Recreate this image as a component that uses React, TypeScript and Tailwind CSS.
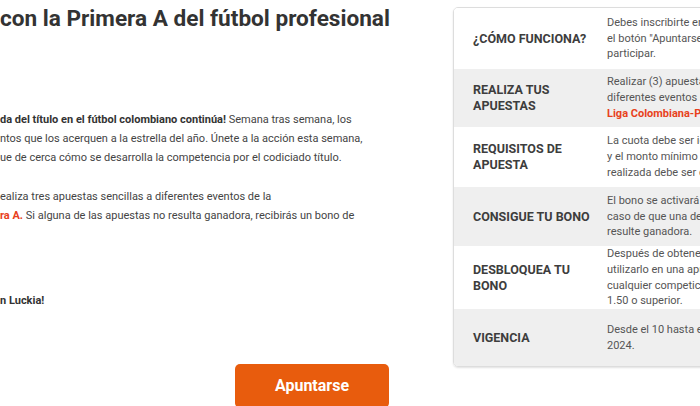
const rows = [
  {
    label: ["¿CÓMO FUNCIONA?"],
    lines: ["Debes inscribirte en la promoción a través de", 'el botón "Apuntarse" que encontrarás para', "participar."],
    h: "h-[61px]",
    gray: false,
  },
  {
    label: ["REALIZA TUS", "APUESTAS"],
    lines: ["Realizar (3) apuestas sencillas a", "diferentes eventos de la"],
    red: "Liga Colombiana-Primera A.",
    h: "h-[58px]",
    gray: true,
  },
  {
    label: ["REQUISITOS DE", "APUESTA"],
    lines: ["La cuota debe ser igual o mayor a 1.50", "y el monto mínimo de cada apuesta", "realizada debe ser de $10.000."],
    h: "h-[60px]",
    gray: false,
  },
  {
    label: ["CONSIGUE TU BONO"],
    lines: ["El bono se activará automáticamente en", "caso de que una de las tres apuestas no", "resulte ganadora."],
    h: "h-[59px]",
    gray: true,
  },
  {
    label: ["DESBLOQUEA TU", "BONO"],
    lines: ["Después de obtener tu bono, podrás", "utilizarlo en una apuesta sencilla de", "cualquier competición con cuota mínima de", "1.50 o superior."],
    h: "h-[63px]",
    gray: false,
  },
  {
    label: ["VIGENCIA"],
    lines: ["Desde el 10 hasta el 31 de marzo de", "2024."],
    h: "h-[58px]",
    gray: true,
  },
];

export default function App() {
  return (
    <div className="flex h-[406px] w-[700px] overflow-hidden bg-white font-['Roboto',sans-serif]">
      {/* left column, text runs off the left edge */}
      <div className="flex w-[453px] shrink-0 flex-col">
        <h1 className="mt-[4px] whitespace-nowrap text-[22.6px] font-bold leading-[30px] text-[#333]">
          con la Primera A del fútbol profesional
        </h1>

        <div className="mt-[76px] text-[11px] leading-[19px] text-[#444]">
          <p className="whitespace-nowrap">
            <b className="font-bold text-[#333]">da del título en el fútbol colombiano continúa!</b> Semana tras semana, los
          </p>
          <p className="whitespace-nowrap">ntos que los acerquen a la estrella del año. Únete a la acción esta semana,</p>
          <p className="whitespace-nowrap">ue de cerca cómo se desarrolla la competencia por el codiciado título.</p>
        </div>

        <div className="mt-[20px] text-[11px] leading-[19px] text-[#444]">
          <p className="whitespace-nowrap">ealiza tres apuestas sencillas a diferentes eventos de la</p>
          <p className="whitespace-nowrap">
            <b className="font-bold text-[#e8411c]">ra A.</b> Si alguna de las apuestas no resulta ganadora, recibirás un bono de
          </p>
        </div>

        <p className="mt-[66px] whitespace-nowrap text-[11px] font-bold leading-[19px] text-[#333]">n Luckia!</p>

        <button className="ml-[235px] mt-[54px] h-[44px] w-[154px] shrink-0 rounded-[5px] bg-[#e85c0d] text-[16px] font-bold text-white">
          Apuntarse
        </button>
      </div>

      {/* info panel */}
      <div className="mt-[7px] h-[360px] w-[330px] shrink-0 overflow-hidden rounded-[5px] border border-[#ddd] shadow-[0_1px_2px_rgba(0,0,0,0.12)]">
        {rows.map((r, i) => (
          <div key={i} className={`flex items-center ${r.h} ${r.gray ? "bg-[#efefef]" : "bg-white"}`}>
            <div className="w-[153px] shrink-0 pl-[19px] text-[12.5px] font-bold leading-[16px] text-[#3d3d3d]">
              {r.label.map((l) => (
                <div key={l} className="whitespace-nowrap">{l}</div>
              ))}
            </div>
            <div className="text-[11px] leading-[15.7px] text-[#555]">
              {r.lines.map((l) => (
                <div key={l} className="whitespace-nowrap">{l}</div>
              ))}
              {r.red && <div className="whitespace-nowrap font-bold text-[#e8411c]">{r.red}</div>}
            </div>
          </div>
        ))}
      </div>
    </div>
  );
}
